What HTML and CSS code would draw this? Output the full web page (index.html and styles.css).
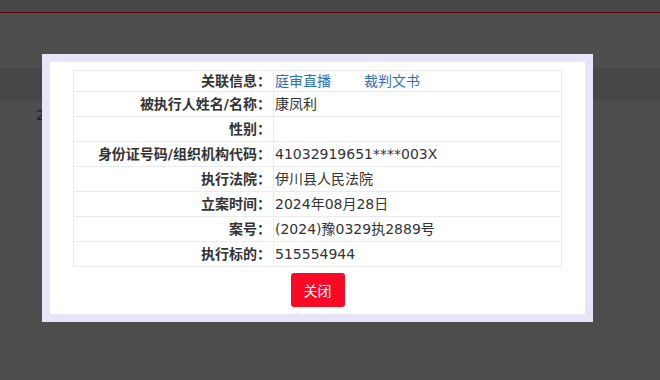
FILE: index.html
```html
<!DOCTYPE html>
<html lang="zh-CN">
<head>
<meta charset="utf-8">
<title>被执行人信息</title>
<link rel="stylesheet" href="styles.css">
</head>
<body>
<div class="page">
  <div class="topbar"></div>
  <div class="spacer"></div>
  <div class="band"></div>
  <div class="content">2024</div>
</div>
<div class="modal">
  <div class="modal-inner">
    <table class="info">
      <tr class="first">
        <th>关联信息：</th>
        <td><a class="link link-gap" href="#">庭审直播</a><a class="link" href="#">裁判文书</a></td>
      </tr>
      <tr><th>被执行人姓名/名称：</th><td>康凤利</td></tr>
      <tr><th>性别：</th><td></td></tr>
      <tr><th>身份证号码/组织机构代码：</th><td>41032919651****003X</td></tr>
      <tr><th>执行法院：</th><td>伊川县人民法院</td></tr>
      <tr><th>立案时间：</th><td>2024年08月28日</td></tr>
      <tr><th>案号：</th><td>(2024)豫0329执2889号</td></tr>
      <tr><th>执行标的：</th><td>515554944</td></tr>
    </table>
    <div class="actions">
      <button class="btn-close" type="button">关闭</button>
    </div>
  </div>
</div>
</body>
</html>
```

FILE: styles.css
```css
html, body {
  margin: 0;
  padding: 0;
}
body {
  width: 660px;
  height: 380px;
  overflow: hidden;
  background: #4d4d4d;
  font-family: "DejaVu Sans", "Noto Sans CJK SC", sans-serif;
  font-size: 14px;
  color: #333;
  position: relative;
}
.page {
  display: flex;
  flex-direction: column;
}
.topbar {
  height: 12px;
  background: #474747;
  border-bottom: 1px solid #5a0505;
}
.spacer {
  height: 55px;
  background: #4e4e4e;
}
.band {
  height: 32px;
  background: #464646;
}
.content {
  padding: 5px 0 0 36px;
  line-height: 20px;
  color: #1c1c1c;
}
.modal {
  position: absolute;
  left: 42px;
  top: 54px;
  width: 551px;
  height: 268px;
  box-sizing: border-box;
  border: 8px solid #e7e6f9;
  background: #fff;
}
.modal-inner {
  padding: 8px 23px 0;
  display: flex;
  flex-direction: column;
  align-items: center;
}
.info {
  width: 489px;
  border-collapse: collapse;
  table-layout: fixed;
}
.info th,
.info td {
  border: 1px solid #ececec;
  height: 24px;
  line-height: 20px;
  vertical-align: middle;
  white-space: nowrap;
}
.info th {
  width: 197px;
  padding: 0 2px 0 0;
  text-align: right;
  font-weight: bold;
  color: #333;
}
.info td {
  padding: 0 0 0 1px;
  text-align: left;
  color: #333;
}
.info tr.first th,
.info tr.first td {
  height: 20px;
}
.link {
  color: #2e6fbd;
  text-decoration: none;
}
.link-gap {
  margin-right: 33px;
}
.actions {
  margin-top: 6px;
  display: flex;
  justify-content: center;
}
.btn-close {
  width: 54px;
  height: 34px;
  border: none;
  border-radius: 3px;
  background: #f80a24;
  color: #fff;
  font-family: "Noto Sans CJK SC", sans-serif;
  font-size: 14px;
  padding: 0;
}
```
